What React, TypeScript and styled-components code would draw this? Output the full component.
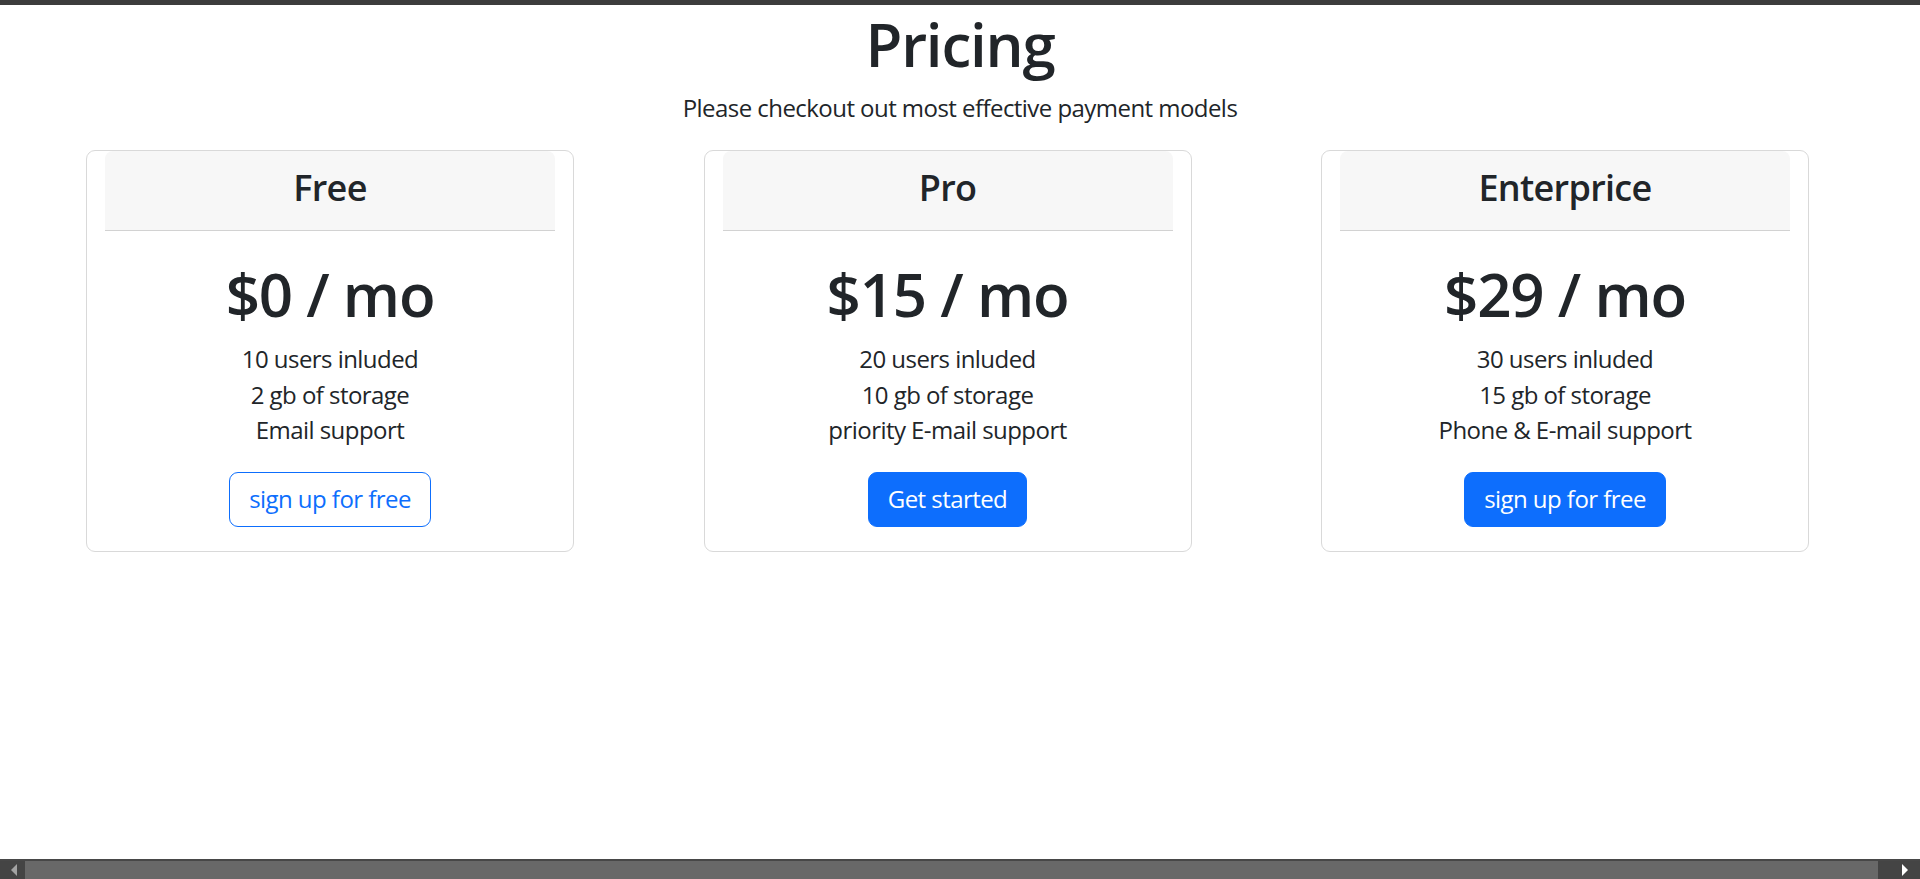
import React from 'react';
import styled, { createGlobalStyle } from 'styled-components';

const GlobalStyle = createGlobalStyle`
  html, body {
    margin: 0;
    padding: 0;
    background: #fff;
  }
  body {
    font-family: "Open Sans", "Noto Sans", Arial, sans-serif;
    color: #212529;
  }
  * {
    box-sizing: border-box;
  }
`;

const Page = styled.div`
  display: flex;
  flex-direction: column;
  height: 100vh;
  overflow: hidden;
`;

const TopBar = styled.div`
  height: 5px;
  flex-shrink: 0;
  background: #3c3c3c;
`;

const Main = styled.main`
  flex: 1;
  text-align: center;
`;

const Title = styled.h1`
  margin: 3px 0 0;
  font-size: 60px;
  line-height: 72px;
  font-weight: 600;
  letter-spacing: -1.2px;
`;

const Subtitle = styled.p`
  margin: 10px 0 0;
  font-size: 24px;
  line-height: 36px;
  letter-spacing: -0.55px;
`;

const CardRow = styled.div`
  display: flex;
  gap: 129.5px;
  padding-left: 86px;
  margin-top: 24px;
`;

const Card = styled.div`
  width: 488px;
  border: 1px solid #d9d9d9;
  border-radius: 9px;
  padding: 0 18px 24px;
`;

const CardHeader = styled.div`
  background: #f7f7f7;
  border-bottom: 1px solid #d2d2d2;
  border-radius: 8px 8px 0 0;
  padding: 15px 0 21px;
`;

const PlanName = styled.h4`
  margin: 0;
  font-size: 36px;
  line-height: 43px;
  font-weight: 600;
  letter-spacing: -0.7px;
`;

const CardBody = styled.div`
  padding-top: 27px;
`;

const Price = styled.h2`
  margin: 0 0 11px;
  font-size: 60px;
  line-height: 72px;
  font-weight: 600;
  letter-spacing: -1.2px;
`;

const Features = styled.ul`
  list-style: none;
  margin: 0 0 24px;
  padding: 0;
`;

const Feature = styled.li`
  font-size: 24px;
  line-height: 35.5px;
  letter-spacing: -0.55px;
`;

const Button = styled.button<{ $outline?: boolean }>`
  font-family: inherit;
  font-size: 24px;
  line-height: 36px;
  letter-spacing: -0.55px;
  padding: 8.5px 19px;
  border-radius: 9px;
  border: 1px solid #0d6efd;
  background: ${(p) => (p.$outline ? '#fff' : '#0d6efd')};
  color: ${(p) => (p.$outline ? '#0d6efd' : '#fff')};
  cursor: pointer;
`;

const ScrollBar = styled.div`
  display: flex;
  height: 20px;
  flex-shrink: 0;
  background: #454545;
  border-top: 2px solid #474747;
`;

const ScrollButton = styled.div<{ $w: number }>`
  width: ${(p) => p.$w}px;
  display: flex;
  align-items: center;
  justify-content: center;
  background: #444444;
`;

const Thumb = styled.div`
  flex: 1;
  background: #686868;
`;

const ArrowLeft = styled.span`
  width: 0;
  height: 0;
  border-top: 6px solid transparent;
  border-bottom: 6px solid transparent;
  border-right: 6px solid #a3a3a3;
  margin-left: 2px;
`;

const ArrowRight = styled.span`
  width: 0;
  height: 0;
  border-top: 6px solid transparent;
  border-bottom: 6px solid transparent;
  border-left: 6px solid #ffffff;
  margin-left: 12px;
`;

const plans = [
  {
    name: 'Free',
    price: '$0 / mo',
    features: ['10 users inluded', '2 gb of storage', 'Email support'],
    cta: 'sign up for free',
    outline: true,
  },
  {
    name: 'Pro',
    price: '$15 / mo',
    features: ['20 users inluded', '10 gb of storage', 'priority E-mail support'],
    cta: 'Get started',
    outline: false,
  },
  {
    name: 'Enterprice',
    price: '$29 / mo',
    features: ['30 users inluded', '15 gb of storage', 'Phone & E-mail support'],
    cta: 'sign up for free',
    outline: false,
  },
];

const App: React.FC = () => {
  return (
    <Page>
      <GlobalStyle />
      <TopBar />
      <Main>
        <Title>Pricing</Title>
        <Subtitle>Please checkout out most effective payment models</Subtitle>
        <CardRow>
          {plans.map((plan) => (
            <Card key={plan.name}>
              <CardHeader>
                <PlanName>{plan.name}</PlanName>
              </CardHeader>
              <CardBody>
                <Price>{plan.price}</Price>
                <Features>
                  {plan.features.map((f) => (
                    <Feature key={f}>{f}</Feature>
                  ))}
                </Features>
                <Button $outline={plan.outline}>{plan.cta}</Button>
              </CardBody>
            </Card>
          ))}
        </CardRow>
      </Main>
      <ScrollBar>
        <ScrollButton $w={25}>
          <ArrowLeft />
        </ScrollButton>
        <Thumb />
        <ScrollButton $w={42}>
          <ArrowRight />
        </ScrollButton>
      </ScrollBar>
    </Page>
  );
};

export default App;
